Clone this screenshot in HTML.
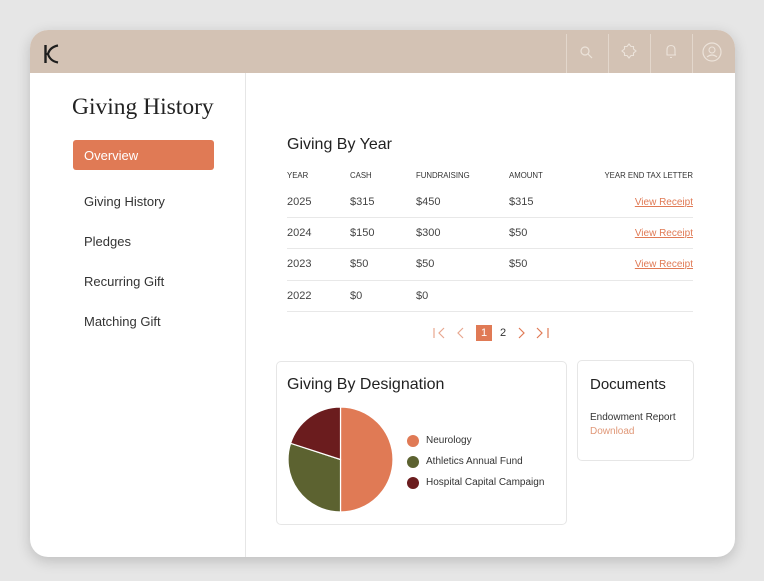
<!DOCTYPE html>
<html><head><meta charset="utf-8"><style>
*{margin:0;padding:0;box-sizing:border-box}
body{width:764px;height:581px;background:#e6e6e6;font-family:"Liberation Sans",sans-serif;position:relative;overflow:hidden;color:#2a2a2a}
.card{position:absolute;left:30px;top:30px;width:705px;height:527px;background:#fff;border-radius:18px;overflow:hidden;box-shadow:0 4px 14px rgba(0,0,0,.18)}
.hdr{position:absolute;left:0;top:0;width:705px;height:43px;background:#d3c2b4}
.vd{position:absolute;top:4px;width:1px;height:39px;background:#e3d7cc}
.a{position:absolute;white-space:nowrap}
.side{position:absolute;left:215px;top:43px;width:1px;height:484px;background:#e6e6e6}
.nav{font-size:13px;color:#333;left:54px}
.th{font-size:7.8px;color:#333;top:141px}
.td{font-size:11px;color:#444}
.lk{font-size:10px;color:#e07a55;text-decoration:underline;right:42px}
.ln{position:absolute;left:257px;width:406px;height:1px;background:#e8e8e8}
.box{position:absolute;border:1px solid #e6e6e6;border-radius:5px;background:#fff}
.dot{position:absolute;width:12px;height:12px;border-radius:50%}
.pg{position:absolute;top:297px}
</style></head><body>
<div class="card">
<div class="hdr">
<svg style="position:absolute;left:13px;top:14px" width="18" height="20" viewBox="0 0 18 20"><path d="M2.5 1V19" stroke="#1e1e1e" stroke-width="2.4"/><path d="M15 1.5Q7 3 5 10Q7 17 15 18.5" stroke="#1e1e1e" stroke-width="2.2" fill="none"/><path d="M2.5 10H6" stroke="#1e1e1e" stroke-width="2"/></svg>
<div class="vd" style="left:536px"></div><div class="vd" style="left:578px"></div><div class="vd" style="left:620px"></div><div class="vd" style="left:662px"></div>
<svg style="position:absolute;left:549px;top:15px" width="14" height="14"><circle cx="6" cy="6" r="4" stroke="#ece3da" fill="none" stroke-width="1.2"/><path d="M9 9L13 13" stroke="#ece3da" stroke-width="1.2"/></svg>
<svg style="position:absolute;left:591px;top:13px" width="16" height="16"><path d="M8 1L10 3.5H12.5V6L15 8L12.5 10V12.5H10L8 15L6 12.5H3.5V10L1 8L3.5 6V3.5H6Z" stroke="#ece3da" fill="none" stroke-width="1.1"/></svg>
<svg style="position:absolute;left:634px;top:13px" width="14" height="17"><path d="M3 12V7Q3 2.5 7 2.5Q11 2.5 11 7V12H2.5M12 12H11M6 14.5H8" stroke="#ece3da" fill="none" stroke-width="1.1"/></svg>
<svg style="position:absolute;left:672px;top:12px" width="20" height="20"><circle cx="10" cy="10" r="9" stroke="#ece3da" fill="none" stroke-width="1.2"/><circle cx="10" cy="8" r="3" stroke="#ece3da" fill="none" stroke-width="1.1"/><path d="M5 15Q10 11 15 15" stroke="#ece3da" fill="none" stroke-width="1.1"/></svg>
</div>
<div class="side"></div>
<div class="a" style="left:42px;top:64px;font-family:'Liberation Serif',serif;font-size:23.5px;color:#222">Giving History</div>
<div class="a" style="left:43px;top:110px;width:141px;height:30px;background:#e07a55;border-radius:3px;color:#fff;font-size:13px;padding:8px 0 0 11px">Overview</div>
<div class="a nav" style="top:164px">Giving History</div>
<div class="a nav" style="top:204px">Pledges</div>
<div class="a nav" style="top:244px">Recurring Gift</div>
<div class="a nav" style="top:284px">Matching Gift</div>

<div class="a" style="left:257px;top:106px;font-size:16px;color:#222">Giving By Year</div>
<div class="a th" style="left:257px">YEAR</div><div class="a th" style="left:320px">CASH</div><div class="a th" style="left:386px">FUNDRAISING</div><div class="a th" style="left:479px">AMOUNT</div><div class="a th" style="right:42px">YEAR END TAX LETTER</div>

<div class="a td" style="left:257px;top:166px">2025</div><div class="a td" style="left:320px;top:166px">$315</div><div class="a td" style="left:386px;top:166px">$450</div><div class="a td" style="left:479px;top:166px">$315</div><div class="a lk" style="top:167px">View Receipt</div>
<div class="ln" style="top:187px"></div>
<div class="a td" style="left:257px;top:197px">2024</div><div class="a td" style="left:320px;top:197px">$150</div><div class="a td" style="left:386px;top:197px">$300</div><div class="a td" style="left:479px;top:197px">$50</div><div class="a lk" style="top:198px">View Receipt</div>
<div class="ln" style="top:218px"></div>
<div class="a td" style="left:257px;top:228px">2023</div><div class="a td" style="left:320px;top:228px">$50</div><div class="a td" style="left:386px;top:228px">$50</div><div class="a td" style="left:479px;top:228px">$50</div><div class="a lk" style="top:229px">View Receipt</div>
<div class="ln" style="top:250px"></div>
<div class="a td" style="left:257px;top:260px">2022</div><div class="a td" style="left:320px;top:260px">$0</div><div class="a td" style="left:386px;top:260px">$0</div>
<div class="ln" style="top:281px"></div>

<svg class="pg" style="left:403px" width="14" height="12"><path d="M1 1V11M11 1L6 6L11 11" stroke="#e8a890" fill="none" stroke-width="1.2"/></svg>
<svg class="pg" style="left:426px" width="10" height="12"><path d="M7 1L2 6L7 11" stroke="#e8a890" fill="none" stroke-width="1.2"/></svg>
<div class="a" style="left:446px;top:295px;width:16px;height:16px;background:#e07a55;color:#fff;font-size:11px;text-align:center;line-height:16px">1</div>
<div class="a" style="left:470px;top:297px;font-size:11px;color:#333">2</div>
<svg class="pg" style="left:486px" width="10" height="12"><path d="M3 1L8 6L3 11" stroke="#e07a55" fill="none" stroke-width="1.2"/></svg>
<svg class="pg" style="left:506px" width="14" height="12"><path d="M1 1L6 6L1 11M12 1V11" stroke="#e07a55" fill="none" stroke-width="1.2"/></svg>

<div class="box" style="left:246px;top:331px;width:291px;height:164px"></div>
<div class="a" style="left:257px;top:346px;font-size:16px;color:#222">Giving By Designation</div>
<svg style="position:absolute;left:256px;top:375px" width="110" height="110" viewBox="0 0 110 110">
<path d="M54.5 54.5L54.5 2A52.5 52.5 0 0 1 54.5 107Z" fill="#e07a55" stroke="#fff" stroke-width="1.2"/>
<path d="M54.5 54.5L54.5 107A52.5 52.5 0 0 1 4.6 38.3Z" fill="#5c6230" stroke="#fff" stroke-width="1.2"/>
<path d="M54.5 54.5L4.6 38.3A52.5 52.5 0 0 1 54.5 2Z" fill="#6b1c1e" stroke="#fff" stroke-width="1.2"/>
</svg>
<div class="dot" style="left:377px;top:405px;background:#e07a55"></div><div class="a" style="left:396px;top:405px;font-size:10px;color:#333">Neurology</div>
<div class="dot" style="left:377px;top:426px;background:#5c6230"></div><div class="a" style="left:396px;top:426px;font-size:10px;color:#333">Athletics Annual Fund</div>
<div class="dot" style="left:377px;top:447px;background:#6b1c1e"></div><div class="a" style="left:396px;top:447px;font-size:10px;color:#333">Hospital Capital Campaign</div>

<div class="box" style="left:547px;top:330px;width:117px;height:101px"></div>
<div class="a" style="left:560px;top:346px;font-size:15px;color:#222">Documents</div>
<div class="a" style="left:560px;top:382px;font-size:10px;color:#333">Endowment Report</div>
<div class="a" style="left:560px;top:396px;font-size:10px;color:#e09878">Download</div>
</div>
</body></html>
